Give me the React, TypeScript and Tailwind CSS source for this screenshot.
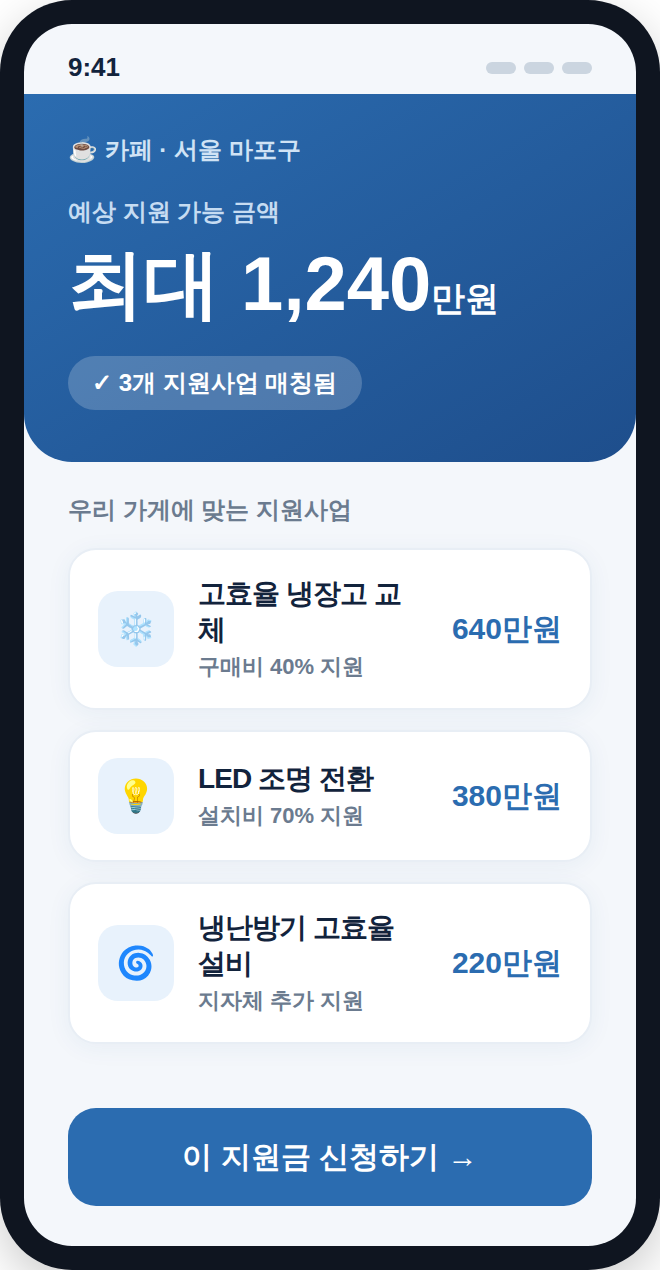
const programs = [
  { icon: "❄️", title: "고효율 냉장고 교체", sub: "구매비 40% 지원", amount: "640만원" },
  { icon: "💡", title: "LED 조명 전환", sub: "설치비 70% 지원", amount: "380만원" },
  { icon: "🌀", title: "냉난방기 고효율 설비", sub: "지자체 추가 지원", amount: "220만원" },
];

function ProgramCard({ icon, title, sub, amount }: { icon: string; title: string; sub: string; amount: string }) {
  return (
    <div className="flex items-center gap-6 rounded-[28px] border-2 border-[#e8eef5] bg-white px-7 py-[26px] shadow-[0_4px_24px_rgba(30,78,140,0.06)]">
      <div className="flex h-[76px] w-[76px] shrink-0 items-center justify-center rounded-[20px] bg-[#e8f2fc] text-[32px]">{icon}</div>
      <div className="min-w-0 flex-1">
        <div className="text-[28px] leading-[36px] font-bold tracking-[-0.9px] text-[#12233c]">{title}</div>
        <div className="mt-1 text-[22px] leading-[30px] font-semibold text-[#6b7b8f]">{sub}</div>
      </div>
      <div className="mb-[2px] shrink-0 text-[30px] font-bold text-[#2b6cb0]">{amount}</div>
    </div>
  );
}

export default function App() {
  return (
    <div className="min-h-[1270px] w-[660px] bg-white font-['Liberation_Sans',sans-serif]">
      <div className="h-[1270px] w-[660px] rounded-[72px] bg-[#0f1520] p-6 shadow-[0_16px_48px_rgba(0,0,0,0.2)]">
        <div className="h-full rounded-[48px] bg-[#f4f7fb]">
          <div className="flex h-[70px] items-center justify-between px-11 pt-[18px]">
            <span className="pb-[2px] text-[26px] font-bold text-[#12233c]">9:41</span>
            <div className="flex gap-2">
              <div className="h-3 w-[30px] rounded-full bg-[#cbd5e0]" />
              <div className="h-3 w-[30px] rounded-full bg-[#cbd5e0]" />
              <div className="h-3 w-[30px] rounded-full bg-[#cbd5e0]" />
            </div>
          </div>

          <div className="h-[368px] rounded-b-[48px] bg-gradient-to-br from-[#2b6cb0] to-[#1e4e8c] px-11 pt-10">
            <div className="text-[24px] leading-[32px] font-semibold text-[#d0e3f5]">☕ 카페 · 서울 마포구</div>
            <div className="mt-[30px] text-[24px] leading-[32px] font-semibold text-[#c6dcf2]">예상 지원 가능 금액</div>
            <div className="mt-[14px] text-[76px] leading-[84px] font-extrabold text-white">
              최대 1,240<span className="text-[34px] font-bold">만원</span>
            </div>
            <div className="mt-4 inline-flex h-[54px] items-center rounded-full bg-white/20 pr-[25px] pl-6 text-[24px] font-bold text-white">✓ 3개 지원사업 매칭됨</div>
          </div>

          <div className="px-11 pt-8">
            <div className="text-[24px] leading-[32px] font-semibold text-[#6b7b8f]">우리 가게에 맞는 지원사업</div>
            <div className="mt-[22px] flex flex-col gap-5">
              {programs.map((p) => (
                <ProgramCard key={p.title} {...p} />
              ))}
            </div>
            <button className="mt-16 h-[98px] w-full rounded-[28px] bg-[#2b6cb0] pb-[2px] text-[30px] font-bold text-white">이 지원금 신청하기 →</button>
          </div>
        </div>
      </div>
    </div>
  );
}
